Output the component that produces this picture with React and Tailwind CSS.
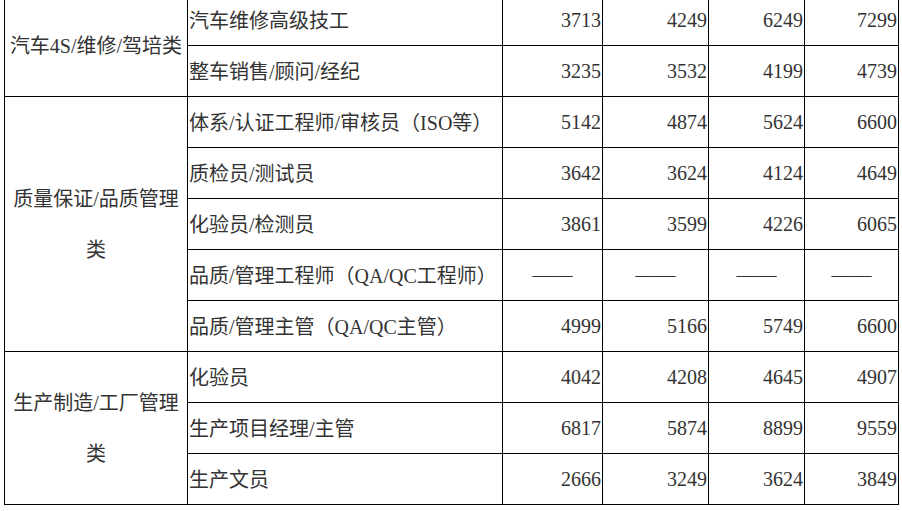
import React from "react";

const groups = [
  {
    name: "汽车4S/维修/驾培类",
    span: "row-span-2",
    rows: [
      ["汽车维修高级技工", "3713", "4249", "6249", "7299"],
      ["整车销售/顾问/经纪", "3235", "3532", "4199", "4739"],
    ],
  },
  {
    name: "质量保证/品质管理类",
    span: "row-span-5",
    rows: [
      ["体系/认证工程师/审核员（ISO等）", "5142", "4874", "5624", "6600"],
      ["质检员/测试员", "3642", "3624", "4124", "4649"],
      ["化验员/检测员", "3861", "3599", "4226", "6065"],
      ["品质/管理工程师（QA/QC工程师）", "——", "——", "——", "——"],
      ["品质/管理主管（QA/QC主管）", "4999", "5166", "5749", "6600"],
    ],
  },
  {
    name: "生产制造/工厂管理类",
    span: "row-span-3",
    rows: [
      ["化验员", "4042", "4208", "4645", "4907"],
      ["生产项目经理/主管", "6817", "5874", "8899", "9559"],
      ["生产文员", "2666", "3249", "3624", "3849"],
    ],
  },
];

export default function App() {
  return (
    <div
      className="w-[902px] h-[511px] overflow-hidden bg-white text-[#333333] text-[20px]"
      style={{ fontFamily: '"Liberation Serif", "Noto Sans CJK SC", serif' }}
    >
      <div className="ml-[4px] mt-[-6px] w-fit grid grid-cols-[182px_314px_99px_105px_95px_93px] gap-px p-px bg-black">
        {groups.map((g) => (
          <React.Fragment key={g.name}>
            <div
              className={`${g.span} bg-white flex items-center justify-center text-center leading-[51px] px-[1px] pt-[2px]`}
            >
              {g.name}
            </div>
            {g.rows.map((r) => (
              <React.Fragment key={r[0]}>
                <div className="h-[50px] bg-white flex items-center pl-px pt-[2px] whitespace-nowrap leading-none">
                  {r[0]}
                </div>
                {r.slice(1).map((v, i) =>
                  v === "——" ? (
                    <div
                      key={i}
                      className="h-[50px] bg-white flex items-center justify-center leading-none"
                    >
                      {v}
                    </div>
                  ) : (
                    <div
                      key={i}
                      className="h-[50px] bg-white flex items-center justify-end pr-px leading-none"
                    >
                      {v}
                    </div>
                  )
                )}
              </React.Fragment>
            ))}
          </React.Fragment>
        ))}
      </div>
    </div>
  );
}
